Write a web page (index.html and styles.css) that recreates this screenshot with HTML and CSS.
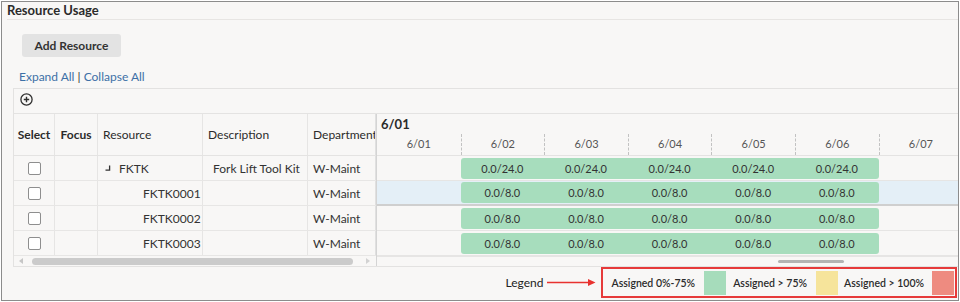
FILE: index.html
```html
<!DOCTYPE html>
<html>
<head>
<meta charset="utf-8">
<link rel="stylesheet" href="styles.css">
</head>
<body>
<div class="frame">
  <div class="title">Resource Usage</div>
  <div class="actions"><button class="btn">Add Resource</button></div>
  <div class="links"><span class="link">Expand All</span> <span class="sep">|</span> <span class="link">Collapse All</span></div>
  <div class="table">
    <div class="tbar">
      <svg class="add-icon" width="13" height="13" viewBox="0 0 13 13"><circle cx="6.5" cy="6.5" r="5.6" fill="none" stroke="#2f2f2f" stroke-width="1.3"/><path d="M6.5 3.8v5.4M3.8 6.5h5.4" stroke="#2f2f2f" stroke-width="1.4"/></svg>
    </div>
    <div class="tbody">
      <div class="left">
        <div class="lhead">
          <div class="cell center b">Select</div>
          <div class="cell center b">Focus</div>
          <div class="cell">Resource</div>
          <div class="cell">Description</div>
          <div class="cell">Department</div>
        </div>
        <div class="lrow">
          <div class="cell center"><span class="chk"></span></div>
          <div class="cell"></div>
          <div class="cell res-parent"><svg class="hook" width="6" height="7" viewBox="0 0 6 7"><path d="M0.5 6.2H4.6V1.5" fill="none" stroke="#333" stroke-width="1.3"/></svg>FKTK</div>
          <div class="cell desc">Fork Lift Tool Kit</div>
          <div class="cell">W-Maint</div>
        </div>
        <div class="lrow">
          <div class="cell center"><span class="chk"></span></div>
          <div class="cell"></div>
          <div class="cell res-child">FKTK0001</div>
          <div class="cell desc"></div>
          <div class="cell">W-Maint</div>
        </div>
        <div class="lrow">
          <div class="cell center"><span class="chk"></span></div>
          <div class="cell"></div>
          <div class="cell res-child">FKTK0002</div>
          <div class="cell desc"></div>
          <div class="cell">W-Maint</div>
        </div>
        <div class="lrow">
          <div class="cell center"><span class="chk"></span></div>
          <div class="cell"></div>
          <div class="cell res-child">FKTK0003</div>
          <div class="cell desc"></div>
          <div class="cell">W-Maint</div>
        </div>
        <div class="lscroll">
          <span class="arr-l"></span>
          <span class="lthumb"></span>
          <span class="arr-r"></span>
        </div>
      </div>
      <div class="gantt">
        <div class="ghead">
          <div class="gmonth">6/01</div>
          <div class="gdays">
            <div class="gday">6/01</div>
            <div class="gday">6/02</div>
            <div class="gday">6/03</div>
            <div class="gday">6/04</div>
            <div class="gday">6/05</div>
            <div class="gday">6/06</div>
            <div class="gday">6/07</div>
          </div>
        </div>
        <div class="grow">
          <div class="bar"><span>0.0/24.0</span><span>0.0/24.0</span><span>0.0/24.0</span><span>0.0/24.0</span><span>0.0/24.0</span></div>
        </div>
        <div class="grow sel">
          <div class="bar"><span>0.0/8.0</span><span>0.0/8.0</span><span>0.0/8.0</span><span>0.0/8.0</span><span>0.0/8.0</span></div>
        </div>
        <div class="grow">
          <div class="bar"><span>0.0/8.0</span><span>0.0/8.0</span><span>0.0/8.0</span><span>0.0/8.0</span><span>0.0/8.0</span></div>
        </div>
        <div class="grow">
          <div class="bar"><span>0.0/8.0</span><span>0.0/8.0</span><span>0.0/8.0</span><span>0.0/8.0</span><span>0.0/8.0</span></div>
        </div>
        <div class="gscroll"><span class="gthumb"></span></div>
      </div>
    </div>
  </div>
  <div class="legend-row">
    <span class="legend-label">Legend</span>
    <svg class="legend-arrow" width="49" height="9" viewBox="0 0 49 9"><path d="M0 4.5H42" stroke="#e8322f" stroke-width="1.6"/><path d="M41 1L48.5 4.5L41 8Z" fill="#e8322f"/></svg>
    <div class="legend-box">
      <span class="lg-text t1">Assigned 0%-75%</span><span class="sw green"></span>
      <span class="lg-text t2">Assigned &gt; 75%</span><span class="sw yellow"></span>
      <span class="lg-text t3">Assigned &gt; 100%</span><span class="sw red"></span>
    </div>
  </div>
</div>
</body>
</html>
```
FILE: styles.css
```css
* { box-sizing: border-box; }
html, body { margin: 0; padding: 0; background: #fff; }
body { font-family: Lato, "Noto Sans", sans-serif; color: #333; }

.frame {
  margin: 1px 0 0 1px;
  width: 958px;
  height: 300px;
  border: 1px solid #8c8c8c;
  background: #f8f7f6;
  display: flex;
  flex-direction: column;
  overflow: hidden;
}

.title {
  margin-left: 5px;
  height: 18px;
  line-height: 17px;
  font-size: 13px;
  font-weight: 700;
  color: #2b2b2b;
  border-bottom: 1px solid #e7e5e3;
  flex: none;
}

.actions { margin: 14px 0 0 20px; flex: none; }
.btn {
  display: block;
  width: 99px;
  height: 23px;
  border: 0;
  border-radius: 3px;
  background: #e3e3e3;
  font-family: Lato, "Noto Sans", sans-serif;
  font-size: 12px;
  font-weight: 700;
  color: #333;
  padding: 0;
}

.links {
  margin: 12px 0 0 17px;
  line-height: 16px;
  font-size: 12px;
  color: #3d70a6;
  flex: none;
}
.links .sep { color: #333; }

.table {
  margin: 3px 0 0 11px;
  border-top: 1px solid #e3e2e1;
  border-left: 1px solid #e3e2e1;
  border-bottom: 1px solid #e3e2e1;
  flex: none;
}
.tbar {
  height: 25px;
  border-bottom: 1px solid #e4e3e2;
  padding: 4px 0 0 6px;
}
.add-icon { display: block; }

.tbody { display: flex; }

.left {
  flex: none;
  width: 363px;
  border-right: 1px solid #d4d4d4;
}
.lhead, .lrow {
  display: grid;
  grid-template-columns: 41px 43px 105px 105px 68px;
}
.lhead { height: 42px; border-bottom: 1px solid #e4e3e2; }
.lrow { height: 25px; border-bottom: 1px solid #e7e6e5; }

.cell {
  border-right: 1px solid #e6e5e4;
  display: flex;
  align-items: center;
  padding-left: 5px;
  font-size: 12px;
  white-space: nowrap;
  overflow: hidden;
  color: #333;
}
.cell:last-child { border-right: 1px solid #e0e0e0; }
.cell.center { justify-content: center; padding-left: 0; }
.cell.b { font-weight: 700; color: #2b2b2b; }
.lhead .cell { color: #2b2b2b; }

.chk {
  width: 13px;
  height: 13px;
  border: 1px solid #8e8e8e;
  border-radius: 2px;
  background: #fff;
}
.res-parent { padding-left: 7px; }
.hook { margin-right: 8px; margin-top: -2px; }
.res-child { padding-left: 45px; }
.desc { padding-left: 10px; }

.lscroll {
  height: 10px;
  display: flex;
  align-items: center;
  padding-left: 5px;
}
.arr-l {
  width: 0; height: 0;
  border-top: 3px solid transparent;
  border-bottom: 3px solid transparent;
  border-right: 4px solid #c6c6c6;
}
.lthumb {
  margin-left: 9px;
  width: 321px;
  height: 7px;
  border-radius: 4px;
  background: #cbcbcb;
}
.arr-r {
  margin-left: 13px;
  width: 0; height: 0;
  border-top: 3px solid transparent;
  border-bottom: 3px solid transparent;
  border-left: 4px solid #d2d2d2;
}

.gantt { flex: 1; min-width: 0; overflow: hidden; }
.ghead { height: 42px; border-bottom: 1px solid #e4e3e2; }
.gmonth {
  height: 20px;
  line-height: 20px;
  padding-left: 4px;
  font-size: 13px;
  font-weight: 700;
  color: #2b2b2b;
}
.gdays {
  display: grid;
  grid-template-columns: repeat(7, 83.6px);
  height: 21px;
}
.gday {
  font-size: 11px;
  line-height: 19px;
  text-align: center;
  color: #555;
}
.gday + .gday { border-left: 1px dashed #c2c2c2; }

.grow {
  display: grid;
  grid-template-columns: repeat(7, 83.6px);
  height: 25px;
  border-bottom: 1px solid #e6e5e4;
  align-items: center;
}
.grow.sel {
  background: #e4eff7;
  border-bottom: 2px solid #cfcfcf;
}
.bar {
  grid-column: 2 / 7;
  height: 21px;
  background: #a7ddbd;
  border-radius: 3px;
  display: grid;
  grid-template-columns: repeat(5, 1fr);
  font-size: 11px;
  color: #333;
}
.bar span { text-align: center; line-height: 21px; }

.gscroll {
  height: 10px;
  border-top: 1px solid #e6e5e4;
  padding: 3px 0 0 401px;
}
.gthumb {
  display: block;
  width: 66px;
  height: 3px;
  border-radius: 2px;
  background: #b3b3b3;
}

.legend-row {
  display: flex;
  justify-content: flex-end;
  align-items: center;
  height: 31px;
  padding-right: 1px;
  flex: none;
}
.legend-label { font-size: 12px; color: #222; margin-right: 4px; }
.legend-arrow { margin-right: 5px; }
.legend-box {
  display: flex;
  align-items: center;
  height: 31px;
  border: 2px solid #e63a3a;
  padding: 0 1px 0 8px;
}
.lg-text { font-size: 10.5px; font-weight: 600; color: #2b2b2b; white-space: nowrap; }
.t1 { margin-right: 9px; }
.t2 { margin-right: 9px; }
.t3 { margin-right: 8px; }
.sw { width: 22px; height: 24px; }
.sw.green { background: #a6dcbb; margin-right: 7px; }
.sw.yellow { background: #f6e49b; margin-right: 6px; }
.sw.red { background: #ee8b80; }
```
